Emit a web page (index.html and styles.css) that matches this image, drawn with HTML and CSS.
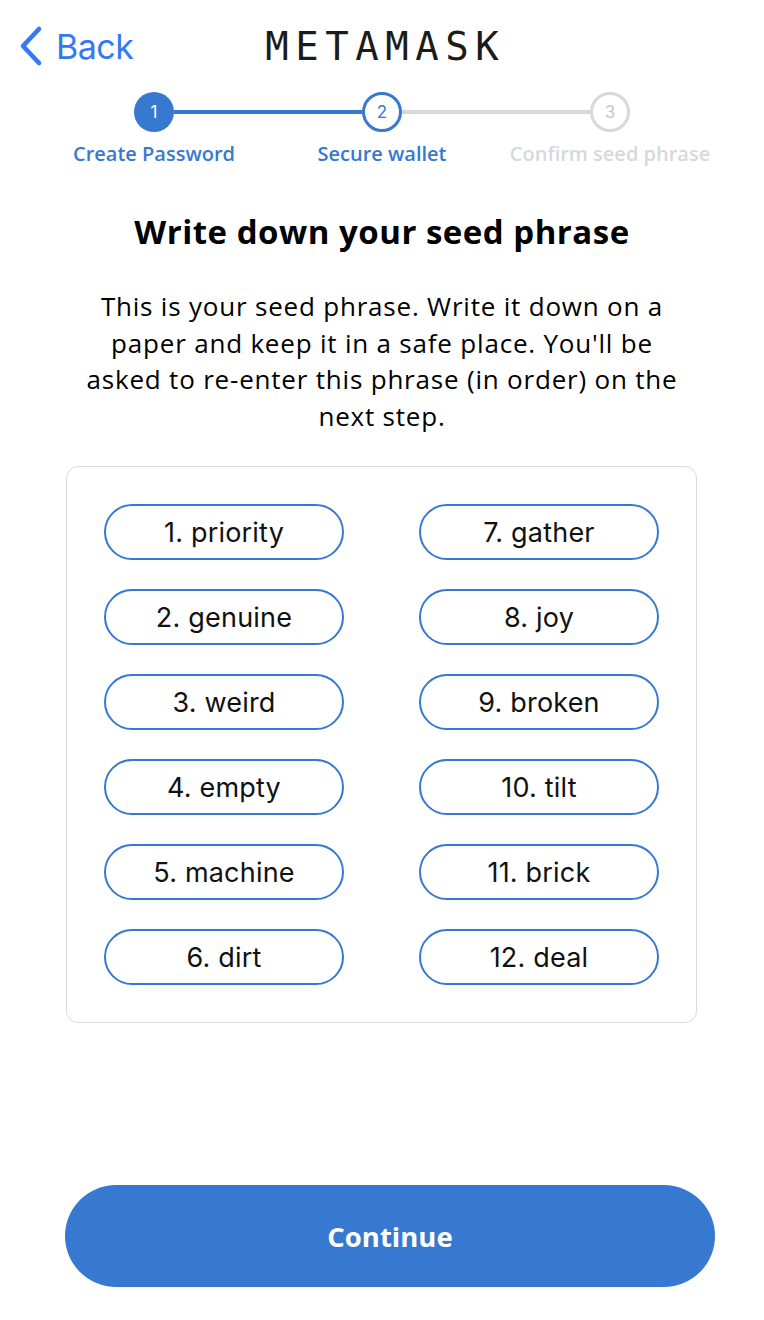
FILE: index.html
```html
<!DOCTYPE html>
<html lang="en">
<head>
<meta charset="utf-8">
<title>MetaMask - Write down your seed phrase</title>
<link rel="stylesheet" href="styles.css">
</head>
<body>
<div class="screen">
  <header class="topbar">
    <a class="back" href="#">
      <svg class="chev" width="26" height="42" viewBox="0 0 26 42" aria-hidden="true">
        <path d="M21 4 L5 21 L21 38" fill="none" stroke="#3478f6" stroke-width="4.6" stroke-linecap="round" stroke-linejoin="round"/>
      </svg>
      <span>Back</span>
    </a>
    <div class="brand">METAMASK</div>
    <div class="spacer"></div>
  </header>

  <section class="stepper">
    <div class="track">
      <div class="dot done">1</div>
      <div class="bar active"></div>
      <div class="dot current">2</div>
      <div class="bar"></div>
      <div class="dot todo">3</div>
    </div>
    <div class="labels">
      <span class="lbl on">Create Password</span>
      <span class="lbl on">Secure wallet</span>
      <span class="lbl off">Confirm seed phrase</span>
    </div>
  </section>

  <h1 class="title">Write down your seed phrase</h1>
  <p class="lead">This is your seed phrase. Write it down on a paper and keep it in a safe place. You'll be asked to re-enter this phrase (in order) on the next step.</p>

  <div class="card">
    <div class="col">
      <div class="word">1. priority</div>
      <div class="word">2. genuine</div>
      <div class="word">3. weird</div>
      <div class="word">4. empty</div>
      <div class="word">5. machine</div>
      <div class="word">6. dirt</div>
    </div>
    <div class="col">
      <div class="word">7. gather</div>
      <div class="word">8. joy</div>
      <div class="word">9. broken</div>
      <div class="word">10. tilt</div>
      <div class="word">11. brick</div>
      <div class="word">12. deal</div>
    </div>
  </div>

  <button class="continue" type="button">Continue</button>
</div>
</body>
</html>
```

FILE: styles.css
```css
* { box-sizing: border-box; }
html, body { margin: 0; padding: 0; background: #ffffff; }
body { width: 764px; height: 1320px; overflow: hidden; }

.screen {
  display: flex;
  flex-direction: column;
  font-family: "Open Sans", "Noto Sans", sans-serif;
  color: #000;
}

.topbar {
  height: 92px;
  display: grid;
  grid-template-columns: 1fr auto 1fr;
  align-items: center;
  padding: 0 18px;
}
.back {
  display: flex;
  align-items: center;
  gap: 12px;
  text-decoration: none;
  color: #3478f6;
  font-family: "Inter", "Roboto", sans-serif;
  font-size: 34px;
  letter-spacing: -0.5px;
}
.chev { display: block; }
.brand {
  font-family: "DejaVu Sans Mono", monospace;
  font-size: 39px;
  letter-spacing: 6.5px;
  padding-left: 6.5px;
  color: #1b1b1b;
}

.stepper { display: flex; flex-direction: column; }
.track {
  display: flex;
  align-items: center;
  padding-left: 134px;
  height: 40px;
}
.dot {
  width: 40px;
  height: 40px;
  border-radius: 50%;
  display: flex;
  align-items: center;
  justify-content: center;
  font-family: "Inter", sans-serif;
  font-size: 17px;
  flex: none;
}
.dot.done { background: #3779d0; color: #fff; }
.dot.current { border: 3.5px solid #3779d0; color: #3779d0; background: #fff; }
.dot.todo { border: 3px solid #d6d9dc; color: #c6c9cc; background: #fff; }
.bar { width: 188px; height: 4px; background: #d6d9dc; flex: none; }
.bar.active { background: #3779d0; }

.labels {
  display: grid;
  grid-template-columns: repeat(3, 228px);
  padding-left: 40px;
  margin-top: 10px;
}
.lbl {
  text-align: center;
  font-size: 20px;
  line-height: 24px;
  font-weight: 600;
  white-space: nowrap;
}
.lbl.on { color: #3779d0; }
.lbl.off { color: #d6d9dc; }

.title {
  margin: 46px 0 0;
  text-align: center;
  font-size: 33px;
  line-height: 40px;
  font-weight: 700;
  letter-spacing: 0.5px;
}
.lead {
  margin: 36px auto 0;
  width: 618px;
  text-align: center;
  font-size: 26px;
  letter-spacing: 0.8px;
  line-height: 36.5px;
}

.card {
  margin: 32px 0 0 66px;
  width: 631px;
  border: 1.5px solid #d9dadc;
  border-radius: 12px;
  padding: 37px;
  display: flex;
  gap: 75px;
}
.col {
  display: flex;
  flex-direction: column;
  gap: 29px;
}
.word {
  width: 240px;
  height: 56px;
  border: 2px solid #3779d0;
  border-radius: 28px;
  display: flex;
  align-items: center;
  justify-content: center;
  font-family: "Inter", "Roboto", sans-serif;
  font-size: 27px;
  letter-spacing: 0.2px;
  color: #111;
}

.continue {
  margin: 162px 0 0 65px;
  width: 650px;
  height: 102px;
  border: none;
  border-radius: 51px;
  background: #3779d0;
  color: #fff;
  font-family: "Open Sans", sans-serif;
  font-weight: 700;
  font-size: 27.5px;
}
```
